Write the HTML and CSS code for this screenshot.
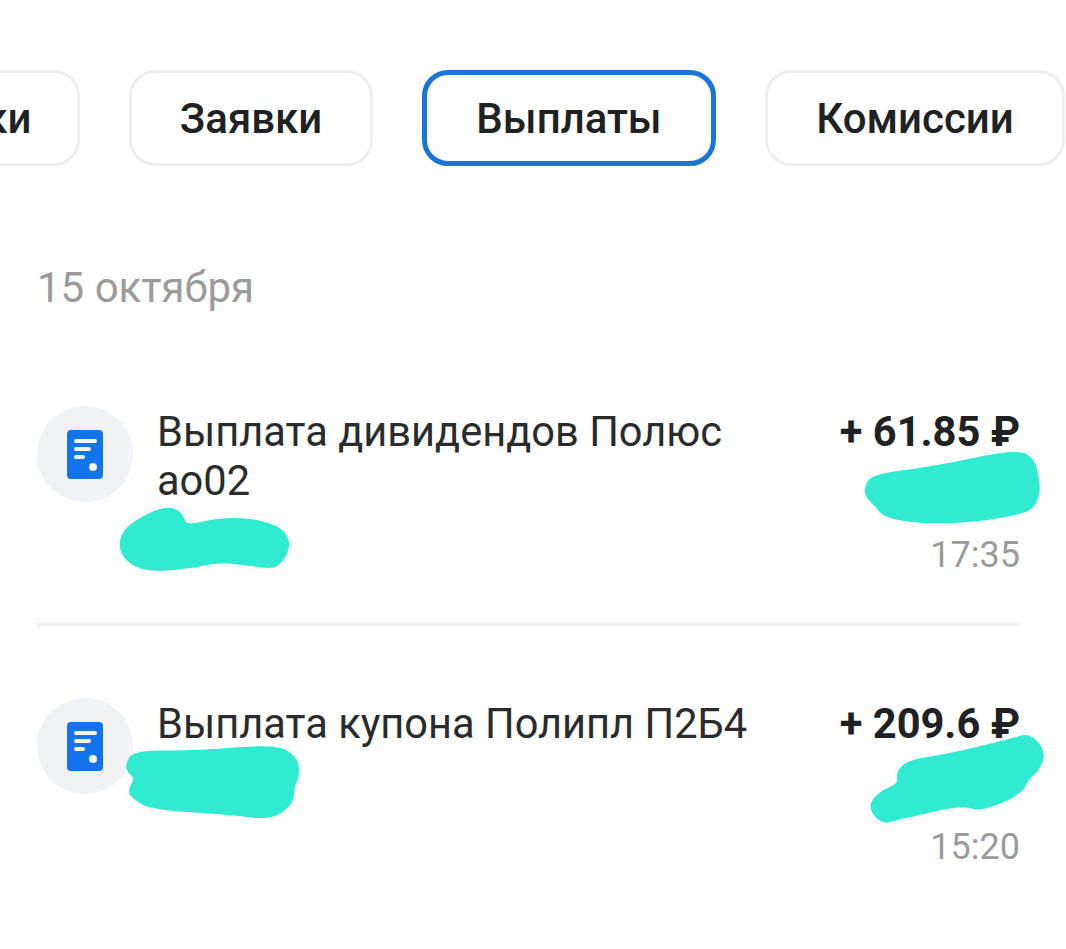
FILE: index.html
```html
<!DOCTYPE html>
<html lang="ru">
<head>
<meta charset="UTF-8">
<meta name="viewport" content="width=device-width, initial-scale=1.0">
<title>Выплаты</title>
<link rel="stylesheet" href="styles.css">
</head>
<body>

<div class="tabs">
    <div class="tab tab-first">Сделки</div>
    <div class="tab tab-orders">Заявки</div>
    <div class="tab tab-active">Выплаты</div>
    <div class="tab tab-fees">Комиссии</div>
</div>

<div class="date">15 октября</div>

<div class="op">
    <div class="op-icon">
        <svg width="36" height="49" viewBox="0 0 36 49">
            <rect width="36" height="49" rx="4" fill="#1273eb"/>
            <path d="M9 11h19M9 19h13M9 27h7" stroke="#f2f6fd" stroke-width="4" stroke-linecap="round"/>
            <circle cx="26" cy="37" r="4" fill="#f2f6fd"/>
        </svg>
    </div>
    <div class="op-title">Выплата дивидендов Полюс ао02</div>
    <div class="op-right">
        <div class="op-sum">+ 61.85 ₽</div>
        <div class="op-time">17:35</div>
    </div>
</div>

<div class="divider"></div>

<div class="op">
    <div class="op-icon">
        <svg width="36" height="49" viewBox="0 0 36 49">
            <rect width="36" height="49" rx="4" fill="#1273eb"/>
            <path d="M9 11h19M9 19h13M9 27h7" stroke="#f2f6fd" stroke-width="4" stroke-linecap="round"/>
            <circle cx="26" cy="37" r="4" fill="#f2f6fd"/>
        </svg>
    </div>
    <div class="op-title">Выплата купона Полипл П2Б4</div>
    <div class="op-right">
        <div class="op-sum">+ 209.6 ₽</div>
        <div class="op-time">15:20</div>
    </div>
</div>

<!-- marker scribbles painted over the screenshot -->
<svg class="scribbles" width="1066" height="949" viewBox="0 0 1066 949">
    <path d="M123.5 552.5Q120 545 123.5 536Q127 527 145 517.5Q163 508 171.5 510Q180 512 182.5 520Q185 528 201 524Q217 520 235 520Q253 520 268 525Q283 530 286 538.5Q289 547 283 557Q277 567 267 566Q257 565 238.5 562.5Q220 560 203.5 563.5Q187 567 167 568.5Q147 570 137 565Q127 560 123.5 552.5Z"/>
    <path d="M867 492.5Q866 488 869.5 482Q873 476 901.5 472.5Q930 469 973.5 460Q1017 451 1025 455.5Q1033 460 1035 469Q1037 478 1037.5 487.5Q1038 497 1032.5 505Q1027 513 987 518Q947 523 917 520.5Q887 518 881 510.5Q875 503 871.5 500Q868 497 867 492.5Z"/>
    <path d="M876 814.5Q870 807 875 800Q880 793 890 789Q900 785 899 779Q898 773 903 767.5Q908 762 930.5 758.5Q953 755 983 747.5Q1013 740 1021.5 737.5Q1030 735 1037 744Q1044 753 1040.5 761.5Q1037 770 1032 774Q1027 778 1023.5 785.5Q1020 793 1000 801.5Q980 810 971.5 806.5Q963 803 930 810.5Q897 818 889.5 820Q882 822 876 814.5Z"/>
    <path d="M128.5 768.5Q127 765 131 758.5Q135 752 164 752.5Q193 753 235 749.5Q277 746 287 753Q297 760 297 768.5Q297 777 294.5 782Q292 787 292 795Q292 803 281 810.5Q270 818 251.5 815.5Q233 813 193 810.5Q153 808 143 802.5Q133 797 131.5 793.5Q130 790 133.5 784Q137 778 133.5 775Q130 772 128.5 768.5Z"/>
</svg>

</body>
</html>
```

FILE: styles.css
```css
body {
    font-family: Roboto, "Liberation Sans", sans-serif;
    background-color: #fff;
    color: #202122;
    margin: 0;
    height: 949px;
    overflow: hidden;
    position: relative;
}
.tabs {
    display: flex;
    justify-content: flex-end;
    gap: 49px;
    padding: 70px 1px 0 0;
    overflow: hidden;
}
.tab {
    flex-shrink: 0;
    box-sizing: border-box;
    height: 96px;
    border: 3px solid #eeeeee;
    border-radius: 26px;
    display: flex;
    align-items: center;
    justify-content: center;
    font-size: 42px;
    font-weight: 500;
}
.tab-first {
    width: 244px;
}
.tab-orders {
    width: 244px;
}
.tab-active {
    width: 294px;
    border: 5px solid #1a75d6;
}
.tab-fees {
    width: 300px;
}
.date {
    margin: 97px 0 21px 37px;
    font-size: 42px;
    line-height: 50px;
    color: #9b9b9b;
}
.op {
    display: flex;
    gap: 24px;
    margin: 0 46px 0 37px;
    padding-top: 72px;
    font-size: 41.6px;
    line-height: 49px;
}
.op-icon {
    flex-shrink: 0;
    width: 96px;
    height: 96px;
    border-radius: 50%;
    background-color: #f1f2f5;
    display: flex;
    align-items: center;
    justify-content: center;
}
.op-title {
    width: 600px;
    padding-top: 1px;
    color: #2a2b2c;
}
.op-right {
    margin-left: auto;
    padding-top: 1px;
    text-align: right;
    white-space: nowrap;
}
.op-sum {
    font-weight: 700;
}
.op-time {
    margin-top: 75px;
    color: #9b9b9b;
    font-size: 36px;
}
.divider {
    height: 3px;
    margin: 43px 46px 0 37px;
    background-color: #f2f2f3;
}
.scribbles {
    position: absolute;
    left: 0;
    top: 0;
    fill: #30ead2;
    stroke: #30ead2;
    stroke-width: 4;
    stroke-linejoin: round;
}
```
